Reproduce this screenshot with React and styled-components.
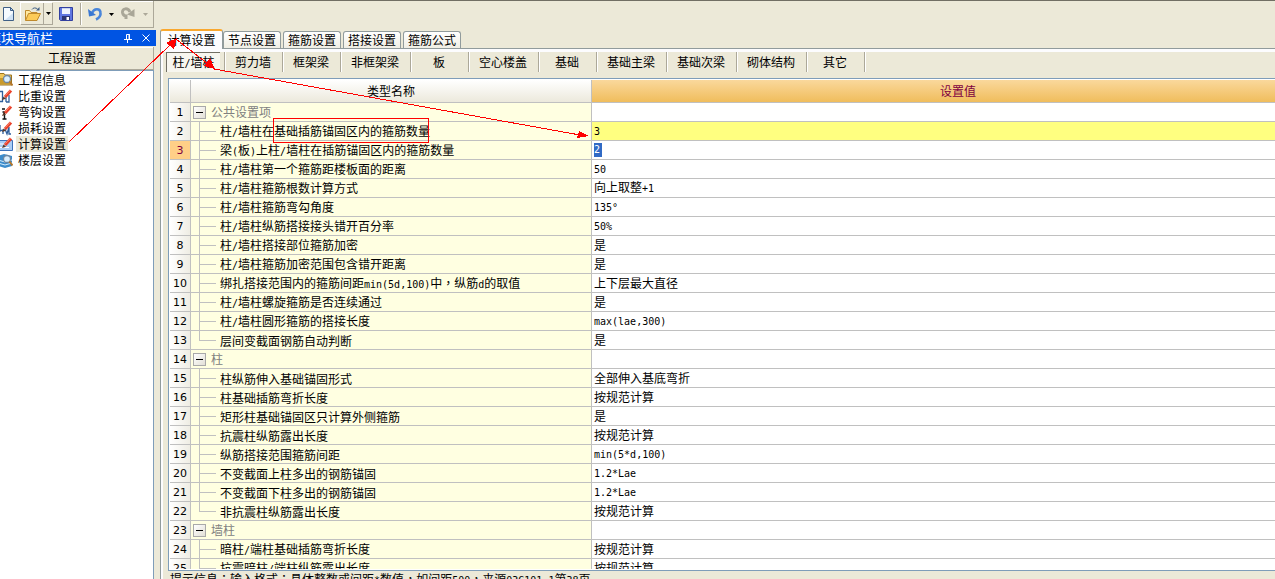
import { useState } from 'react';
import styled, { createGlobalStyle, css } from 'styled-components';

const FACE = '#ece9d8';
const GRID = '#c0c0c0';
const SHADOW = '#aca899';

const GlobalStyle = createGlobalStyle`
  * {
    box-sizing: border-box;
  }
  body {
    margin: 0;
    overflow: hidden;
    background: ${FACE};
    color: #000;
    font: 12px/16px "Noto Sans CJK SC", sans-serif;
  }
  button, input {
    font: inherit;
    color: inherit;
    margin: 0;
    padding: 0;
    border: 0;
    background: none;
    border-radius: 0;
  }
  svg {
    display: block;
  }
`;

const Shell = styled.div`
  position: relative;
  display: flex;
  flex-direction: column;
  height: 100vh;
  overflow: hidden;
  border-top: 1px solid #716f64;
`;

const HalfWidth = styled.span`
  font-family: "DejaVu Sans Mono", monospace;
  font-size: 10px;
`;

const Punctuation = styled.span`
  font-family: "Noto Sans CJK TC", sans-serif;
`;

// latin characters take half the width of a chinese one
const Mixed = ({ text }) => (
  text.split(/([\x20-\x7e°]+|[：，])/).filter(x => x).map((part, i) => {
    if (/^[\x20-\x7e°]/.test(part)) return <HalfWidth key={i}>{part}</HalfWidth>;
    if (/^[：，]/.test(part)) return <Punctuation key={i}>{part}</Punctuation>;
    return part;
  })
);

/* ---------- toolbar ---------- */

const Toolbar = styled.div`
  flex: none;
  align-self: flex-start;
  display: flex;
  align-items: center;
  width: 154px;
  height: 27px;
  margin-bottom: 1px;
  border: solid ${SHADOW};
  border-width: 0 1px 1px 0;
  box-shadow: inset 0 1px #fff;
`;

const ToolGroup = styled.div`
  flex: none;
  display: flex;
  margin-left: 3px;
  box-shadow: -1px -1px #fff;
`;

const ToolButton = styled.button`
  flex: none;
  display: flex;
  align-items: center;
  justify-content: center;
  width: ${props => props.$width}px;
  height: 22px;
  ${props => props.$hot && css`
    border: solid ${SHADOW};
    border-width: 0 1px 1px 0;
  `}
`;

const ToolSeparator = styled.span`
  flex: none;
  width: 2px;
  height: 22px;
  margin: 0 3px 0 2px;
  border-left: 1px solid ${SHADOW};
  border-right: 1px solid #fff;
`;

const Caret = ({ color = '#000' }) => (
  <svg width="5" height="3" viewBox="0 0 5 3">
    <path d="M0 0h5L2.500 3z" fill={color} />
  </svg>
);

const NewIcon = () => (
  <svg width="16" height="16" viewBox="0 0 16 16">
    <path d="M2.500 1.500h7l3 3v10h-10z" fill="#f4faff" stroke="#3f5f86" />
    <path d="M9.500 1.500v3h3z" fill="#b9d0ea" stroke="#3f5f86" />
    <path d="M4 14l8-7v7z" fill="#cfe2f5" />
  </svg>
);

const OpenIcon = () => (
  <svg width="17" height="16" viewBox="0 0 17 16">
    <path d="M1.500 14V4.500h4l1.500 2h6V14z" fill="#ffe9a0" stroke="#c08a2c" />
    <path d="M1.500 14.500l3-7h12l-3.500 7z" fill="#fccb58" stroke="#c08a2c" />
    <path d="M8 3.500c1-2 4-2 5.500-.5" fill="none" stroke="#3f5f86" />
    <path d="M12 4.500h3.500V1z" fill="#3f5f86" />
  </svg>
);

const SaveIcon = () => (
  <svg width="16" height="16" viewBox="0 0 16 16">
    <path d="M1.500 1.500h13v13h-12l-1-1z" fill="#5f76e0" stroke="#3240a0" />
    <path d="M4 2h8v6H4z" fill="#eef3fd" />
    <path d="M4 2h8v1H4z" fill="#c8d3ef" />
    <path d="M4 10h8v4H4z" fill="#2b3470" />
    <path d="M8.500 11h2.500v3H8.500z" fill="#fff" />
  </svg>
);

const UndoIcon = () => (
  <svg width="16" height="16" viewBox="0 0 16 16">
    <path d="M5 7c2-5 8-5 8.500-.5C14 10 12 12 9 13.500" fill="none" stroke="#4a86da" strokeWidth="2.600" />
    <path d="M1 3l1 7.500 7-1.500z" fill="#3a78d2" />
  </svg>
);

const RedoIcon = () => (
  <svg width="16" height="16" viewBox="0 0 16 16">
    <path d="M10 6C8 1.500 2 2 2.500 6.500 3 9 4 10 6 10v3" fill="none" stroke="#a9a697" strokeWidth="3" />
    <path d="M14.500 3v8L7 8.500z" fill="#a9a697" />
  </svg>
);

/* ---------- navigation ---------- */

const Body = styled.div`
  flex: 1;
  display: flex;
  min-height: 0;
`;

const Sidebar = styled.aside`
  flex: none;
  display: flex;
  flex-direction: column;
  width: 156px;
  padding-top: 1px;
`;

const SidebarTitle = styled.div`
  flex: none;
  display: flex;
  align-items: center;
  height: 16px;
  padding-right: 4px;
  background: #0054e3;
  color: #fff;
  font-size: 13px;
  white-space: nowrap;
  span {
    flex: 1;
    text-indent: -12px;
  }
`;

const TitleButton = styled.button`
  display: flex;
  align-items: center;
  justify-content: center;
  width: 12px;
  height: 12px;
  margin-left: 6px;
`;

const GroupButton = styled.button`
  flex: none;
  height: 23px;
  margin: 1px 2px 0 0;
  padding-right: 9px;
  border: solid ${SHADOW};
  border-width: 0 1px 1px 0;
  background: ${FACE};
  box-shadow: inset 0 1px #fff;
`;

const Tree = styled.nav`
  flex: 1;
  margin-right: 2px;
  padding-top: 1px;
  border: solid #7f9db9;
  border-width: 1px 1px 0 0;
  background: #fff;
`;

const TreeItem = styled.a`
  display: flex;
  align-items: center;
  height: 16px;
  color: #000;
  text-decoration: none;
  svg {
    flex: none;
    margin-left: -3px;
  }
`;

const TreeLabel = styled.span`
  margin-left: 3px;
  padding: 0 2px;
  background: ${props => props.$active ? FACE : 'none'};
`;

const Pencil = () => (
  <>
    <path d="M8 9L14 2.500" stroke="#e8402a" strokeWidth="3.200" />
    <path d="M8.500 7.500L13.500 2" stroke="#ff8a70" strokeWidth="1" />
    <path d="M5 12l1.500-3.500 2.500 2.200z" fill="#5a3a28" />
  </>
);

const Magnifier = () => (
  <>
    <circle cx="10" cy="7" r="3.500" fill="#d9efff" stroke="#6f87a0" strokeWidth="1.300" />
    <path d="M12.500 9.500l3 4" stroke="#b3762c" strokeWidth="2" />
  </>
);

const treeArt = {
  info: (
    <>
      <path d="M0 1.500h7l1 1.500h6.500v10H0z" fill="#f0c75a" stroke="#9c7420" />
      <path d="M0 6h13v6H0z" fill="#c99a2c" />
      <Magnifier />
    </>
  ),
  weight: (
    <>
      <path d="M5.500 3v11M3 3.500h3M3 13.500h3M9 14h3V7M9 8v6" fill="none" stroke="#2f5f9c" strokeWidth="1.300" />
      <Pencil />
    </>
  ),
  hook: (
    <>
      <path d="M5 5h3M7.500 8v7M5.500 15h4M5.500 8h4" fill="none" stroke="#111" strokeWidth="1.400" />
      <Pencil />
    </>
  ),
  loss: (
    <>
      <path d="M3 5v6l3-1v4M8 9l2 5 2-7v7h2" fill="none" stroke="#2f5f9c" strokeWidth="1.300" />
      <Pencil />
    </>
  ),
  calc: (
    <>
      <path d="M.5 4.500h15v10H.5z" fill="#a9cdf5" stroke="#3d73bb" />
      <path d="M3 8h5M3 11.500h9" stroke="#fff" />
      <Pencil />
    </>
  ),
  floor: (
    <>
      <path d="M1 4l6-2 8 2v10l-7 2-7-2z" fill="#3c8ccc" />
      <path d="M1 8l7 2 7-2M1 11l7 2 7-2" fill="none" stroke="#d6ecfb" />
      <Magnifier />
    </>
  ),
};

const TREE = [
  ['info', '工程信息'],
  ['weight', '比重设置'],
  ['hook', '弯钩设置'],
  ['loss', '损耗设置'],
  ['calc', '计算设置'],
  ['floor', '楼层设置'],
];

/* ---------- tabs ---------- */

const Main = styled.main`
  flex: 1;
  display: flex;
  flex-direction: column;
  min-width: 0;
  margin-left: 4px;
  overflow: hidden;
`;

const TabBar = styled.div`
  flex: none;
  display: flex;
  align-items: flex-end;
  height: 20px;
  border-bottom: 1px solid #919b9c;
`;

const Tab = styled.button`
  height: 17px;
  width: 58px;
  margin-right: 2px;
  border: 1px solid #919b9c;
  border-bottom: 0;
  border-radius: 3px 3px 0 0;
  background: linear-gradient(#fff, #f0eee4);
  line-height: 16px;
  white-space: nowrap;
  ${props => props.$active && css`
    height: 20px;
    width: 63px;
    margin: 0 0 -1px;
    border-top: 2px solid #f9a82f;
    background: #fcfcfe;
  `}
`;

const Page = styled.div`
  flex: 1;
  display: flex;
  flex-direction: column;
  min-height: 0;
  padding-left: 5px;
  border-left: 1px solid #919b9c;
  box-shadow: inset 2px 3px #fcfcfe;
`;

const SubTabs = styled.div`
  flex: none;
  display: flex;
  height: 20px;
  margin: 3px 0 6px;
`;

const SubTabCell = styled.div`
  flex: none;
  display: flex;
  border-right: 1px solid ${SHADOW};
  box-shadow: 1px 0 #fff;
`;

const SubTab = styled.button`
  min-width: 57px;
  padding: 0 11px 0 10px;
  white-space: nowrap;
  ${props => props.$active && css`
    min-width: 54px;
    margin-right: 4px;
    padding: 0 5px;
    border: solid #716f64;
    border-width: 1px 0 0 1px;
    background: #f7f6ef;
  `}
`;

/* ---------- settings grid ---------- */

const GridFrame = styled.div`
  flex: 1;
  min-height: 0;
  margin: 0 -51px 0 2px;
  padding: 1px 0 1px 1px;
  overflow: hidden;
  border: 1px solid #7f9db9;
  background: #fff;
`;

const GridClip = styled.div`
  height: 100%;
  overflow: hidden;
`;

const Grid = styled.table`
  width: 100%;
  table-layout: fixed;
  border-collapse: separate;
  border-spacing: 0;
  th, td {
    height: 19px;
    padding: 0;
    border: solid ${GRID};
    border-width: 0 1px 1px 0;
    font-weight: normal;
    line-height: 16px;
    white-space: nowrap;
  }
`;

const HeadCell = styled.th`
  && {
    height: 23px;
    background: ${props => props.$hot ? 'linear-gradient(#fad89c, #f0bd5c)' : 'linear-gradient(#fff, #ece9dc)'};
    color: ${props => props.$hot ? '#800040' : '#000'};
  }
`;

const RowNumber = styled.th`
  && {
    padding-top: 2px;
  }
  background: ${props => props.$current ? '#ffcf87' : 'linear-gradient(90deg, #fff, #efede4)'};
  color: ${props => props.$current ? '#800040' : '#000'};
  font-family: "DejaVu Sans", sans-serif;
  font-size: 11px;
`;

const NameCell = styled.td`
  background: #ffffe1;
`;

const NameLine = styled.div`
  display: flex;
  align-items: center;
  height: 18px;
  color: ${props => props.$group ? '#808080' : '#000'};
`;

const NameText = styled.span`
  padding-top: 2px;
`;

const Toggle = styled.button`
  flex: none;
  display: flex;
  align-items: center;
  justify-content: center;
  width: 13px;
  height: 13px;
  margin: 0 5px 0 2px;
  border: 1px solid #a9a9a9;
  background: linear-gradient(135deg, #fff, #e2dfd6);
`;

const Minus = styled.span`
  width: 7px;
  height: 1px;
  background: #000;
`;

const Branch = styled.span`
  flex: none;
  display: grid;
  grid-template: 10px 1fr / 17px;
  width: 17px;
  height: 19px;
  margin: 0 4px -1px 8px;
  &::before, &::after {
    content: '';
    border-left: 1px solid ${GRID};
  }
  &::before {
    border-bottom: 1px solid ${GRID};
  }
  &::after {
    visibility: ${props => props.$last ? 'hidden' : 'visible'};
  }
`;

const ValueCell = styled.td`
  background: ${props => props.$marked ? '#ffff80' : '#fff'};
`;

const ValueLine = styled.div`
  display: flex;
  align-items: center;
  height: 18px;
  padding-left: 2px;
`;

const ValueInput = styled.input`
  width: 8px;
  height: 14px;
  background: #316ac5;
  color: #fff;
  font-family: "DejaVu Sans Mono", monospace;
  font-size: 10px;
  outline: none;
`;

const StatusBar = styled.footer`
  flex: none;
  height: 8px;
  padding-left: 4px;
  overflow: hidden;
  white-space: nowrap;
`;

const Notes = styled.svg`
  position: absolute;
  top: -1px;
  left: 0;
  pointer-events: none;
`;

const TABS = ['计算设置', '节点设置', '箍筋设置', '搭接设置', '箍筋公式'];

const SUB_TABS = [
  '柱/墙柱', '剪力墙', '框架梁', '非框架梁', '板', '空心楼盖',
  '基础', '基础主梁', '基础次梁', '砌体结构', '其它',
];

const ROWS = [
  { group: '公共设置项' },
  { name: '柱/墙柱在基础插筋锚固区内的箍筋数量', value: '3', marked: true },
  { name: '梁(板)上柱/墙柱在插筋锚固区内的箍筋数量', value: '2', editing: true },
  { name: '柱/墙柱第一个箍筋距楼板面的距离', value: '50' },
  { name: '柱/墙柱箍筋根数计算方式', value: '向上取整+1' },
  { name: '柱/墙柱箍筋弯勾角度', value: '135°' },
  { name: '柱/墙柱纵筋搭接接头错开百分率', value: '50%' },
  { name: '柱/墙柱搭接部位箍筋加密', value: '是' },
  { name: '柱/墙柱箍筋加密范围包含错开距离', value: '是' },
  { name: '绑扎搭接范围内的箍筋间距min(5d,100)中，纵筋d的取值', value: '上下层最大直径' },
  { name: '柱/墙柱螺旋箍筋是否连续通过', value: '是' },
  { name: '柱/墙柱圆形箍筋的搭接长度', value: 'max(lae,300)' },
  { name: '层间变截面钢筋自动判断', value: '是' },
  { group: '柱' },
  { name: '柱纵筋伸入基础锚固形式', value: '全部伸入基底弯折' },
  { name: '柱基础插筋弯折长度', value: '按规范计算' },
  { name: '矩形柱基础锚固区只计算外侧箍筋', value: '是' },
  { name: '抗震柱纵筋露出长度', value: '按规范计算' },
  { name: '纵筋搭接范围箍筋间距', value: 'min(5*d,100)' },
  { name: '不变截面上柱多出的钢筋锚固', value: '1.2*Lae' },
  { name: '不变截面下柱多出的钢筋锚固', value: '1.2*Lae' },
  { name: '非抗震柱纵筋露出长度', value: '按规范计算' },
  { group: '墙柱' },
  { name: '暗柱/端柱基础插筋弯折长度', value: '按规范计算' },
  { name: '抗震暗柱/端柱纵筋露出长度', value: '按规范计算' },
];

const SettingRow = ({ row, number, last }) => {
  const [value, setValue] = useState(row.value);

  if (row.group) {
    return (
      <tr>
        <RowNumber scope="row">{number}</RowNumber>
        <NameCell>
          <NameLine $group>
            <Toggle aria-label={row.group}><Minus /></Toggle>
            {row.group}
          </NameLine>
        </NameCell>
        <ValueCell />
      </tr>
    );
  }

  return (
    <tr>
      <RowNumber scope="row" $current={row.editing}>{number}</RowNumber>
      <NameCell>
        <NameLine>
          <Branch $last={last} />
          <NameText><Mixed text={row.name} /></NameText>
        </NameLine>
      </NameCell>
      <ValueCell $marked={row.marked}>
        <ValueLine>
          {row.editing
            ? <ValueInput aria-label={row.name} value={value} onChange={e => setValue(e.target.value)} />
            : <span><Mixed text={value} /></span>}
        </ValueLine>
      </ValueCell>
    </tr>
  );
};

const App = () => {
  const [tab, setTab] = useState(TABS[0]);
  const [subTab, setSubTab] = useState(SUB_TABS[0]);

  return (
    <>
      <GlobalStyle />
      <Shell>
        <Toolbar>
          <ToolButton $width={18} aria-label="新建"><NewIcon /></ToolButton>
          <ToolGroup>
            <ToolButton $width={23} $hot aria-label="打开"><OpenIcon /></ToolButton>
            <ToolButton $width={9} $hot aria-label="打开列表"><Caret /></ToolButton>
          </ToolGroup>
          <ToolButton $width={25} aria-label="保存"><SaveIcon /></ToolButton>
          <ToolSeparator />
          <ToolButton $width={20} aria-label="撤销"><UndoIcon /></ToolButton>
          <ToolButton $width={13} aria-label="撤销列表"><Caret /></ToolButton>
          <ToolButton $width={20} aria-label="恢复"><RedoIcon /></ToolButton>
          <ToolButton $width={14} aria-label="恢复列表"><Caret color={SHADOW} /></ToolButton>
        </Toolbar>
        <Body>
          <Sidebar>
            <SidebarTitle>
              <span>模块导航栏</span>
              <TitleButton aria-label="固定">
                <svg width="8" height="9" viewBox="0 0 8 9">
                  <path d="M2.500 5V.5h3V5M5 0v5M0 5.500h8M3.500 6v3" fill="none" stroke="#fff" />
                </svg>
              </TitleButton>
              <TitleButton aria-label="关闭">
                <svg width="8" height="8" viewBox="0 0 8 8">
                  <path d="M.5.5l7 7M7.500.5l-7 7" stroke="#fff" />
                </svg>
              </TitleButton>
            </SidebarTitle>
            <GroupButton>工程设置</GroupButton>
            <Tree>
              {TREE.map(([art, label]) => (
                <TreeItem href={'#' + art} key={art}>
                  <svg width="16" height="16" viewBox="0 0 16 16">{treeArt[art]}</svg>
                  <TreeLabel $active={art === 'calc'}>{label}</TreeLabel>
                </TreeItem>
              ))}
            </Tree>
          </Sidebar>
          <Main>
            <TabBar>
              {TABS.map(x => (
                <Tab key={x} $active={x === tab} onClick={() => setTab(x)}>{x}</Tab>
              ))}
            </TabBar>
            <Page>
              <SubTabs>
                {SUB_TABS.map(x => (
                  <SubTabCell key={x}>
                    <SubTab $active={x === subTab} onClick={() => setSubTab(x)}><Mixed text={x} /></SubTab>
                  </SubTabCell>
                ))}
              </SubTabs>
              <GridFrame>
                <GridClip>
                  <Grid>
                    <colgroup>
                      <col width="21" />
                      <col width="401" />
                      <col />
                    </colgroup>
                    <thead>
                      <tr>
                        <HeadCell />
                        <HeadCell scope="col">类型名称</HeadCell>
                        <HeadCell scope="col" $hot>设置值</HeadCell>
                      </tr>
                    </thead>
                    <tbody>
                      {ROWS.map((row, i) => (
                        <SettingRow
                          key={i}
                          row={row}
                          number={i + 1}
                          last={Boolean(ROWS[i + 1] && ROWS[i + 1].group)}
                        />
                      ))}
                    </tbody>
                  </Grid>
                </GridClip>
              </GridFrame>
              <StatusBar>
                <Mixed text="提示信息：输入格式：具体整数或间距*数值，如间距500，来源03G101-1第38页" />
              </StatusBar>
            </Page>
          </Main>
        </Body>
        <Notes width="600" height="150" viewBox="0 0 600 150" shapeRendering="crispEdges">
          <g fill="none" stroke="#f00">
            <path d="M69 142L170 45M176 39l32 25M214 69l366 66" />
            <path d="M273.500 118.500h155v24h-155z" />
          </g>
          <g fill="#f00">
            <path d="M177 38l-11 5 8 6z" />
            <path d="M215 69l-11-3 6-8z" />
            <path d="M589 136l-10-5-2 7z" />
          </g>
        </Notes>
      </Shell>
    </>
  );
};

export default App;
